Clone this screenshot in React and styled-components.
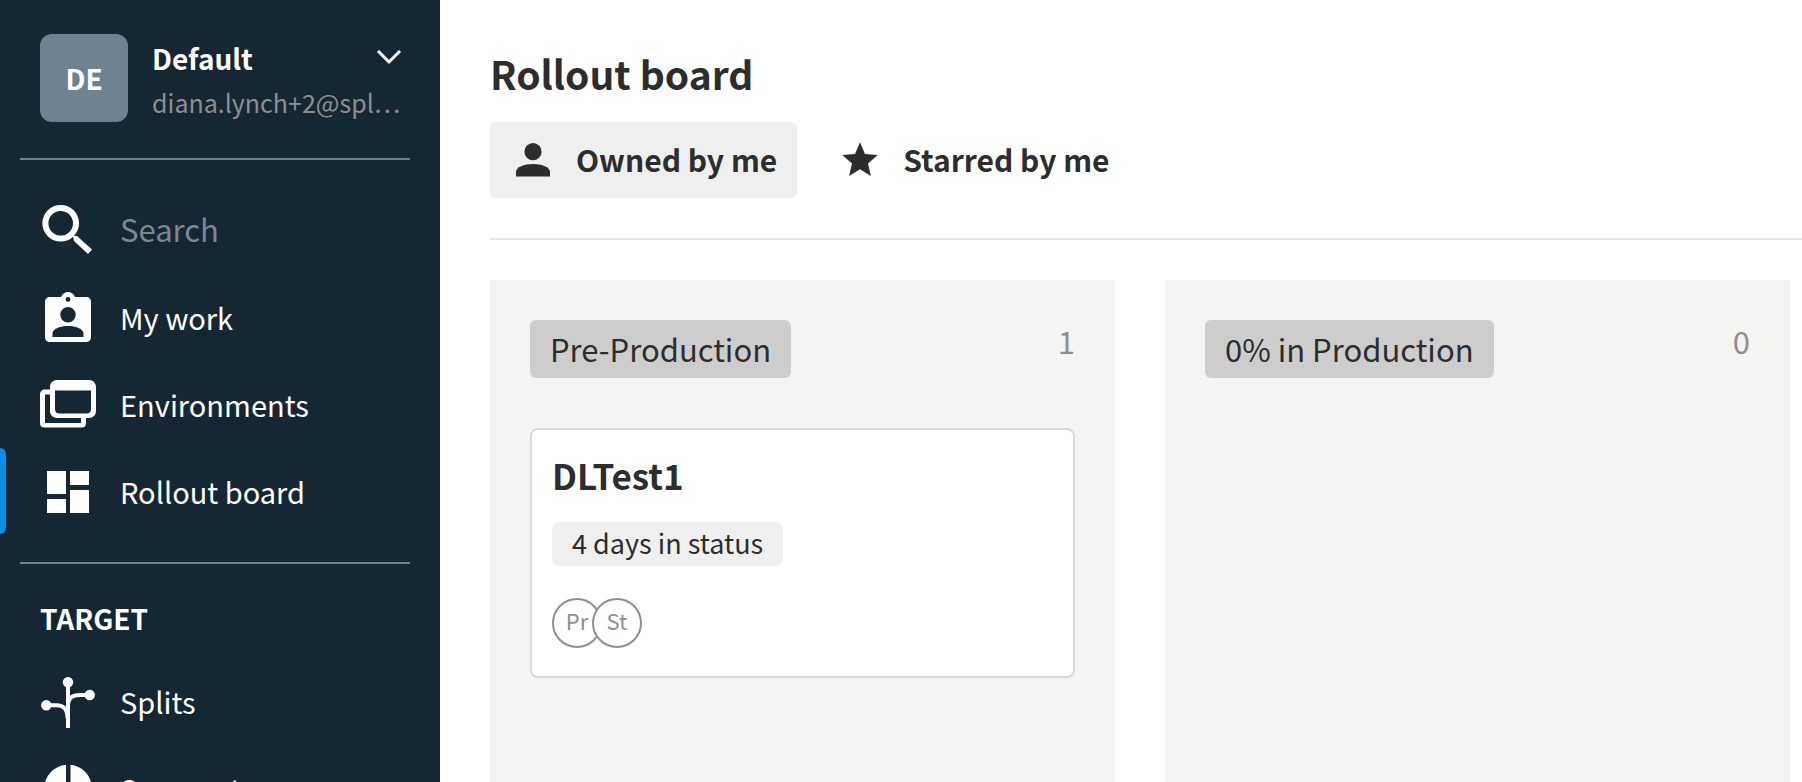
import React from "react";
import styled, { createGlobalStyle, css } from "styled-components";

const Global = createGlobalStyle`
  *, *::before, *::after { box-sizing: border-box; }
  body {
    margin: 0;
    background: #ffffff;
    color: #2d2d2d;
    font-family: "Noto Sans CJK KR", "Noto Sans", sans-serif;
  }
  h1, h2, h3, p, ul { margin: 0; padding: 0; }
  ul { list-style: none; }
  a { color: inherit; text-decoration: none; }
  button, input { font: inherit; color: inherit; border: 0; background: none; margin: 0; padding: 0; }
  button { cursor: pointer; }
`;

const Layout = styled.div`
  display: flex;
  height: 100vh;
  overflow: hidden;
`;

const Sidebar = styled.aside`
  flex: 0 0 440px;
  background: #162734;
  color: #ffffff;
  overflow: hidden;
`;

const Workspace = styled.button`
  display: flex;
  width: 100%;
  gap: 24px;
  padding: 34px 38px 36px 40px;
  text-align: left;
`;

const Avatar = styled.span`
  flex: none;
  display: grid;
  place-items: center;
  width: 88px;
  height: 88px;
  border-radius: 12px;
  background: #708290;
  font-size: 28px;
  font-weight: 700;
`;

const WorkspaceText = styled.span`
  flex: 1;
  min-width: 0;
  display: flex;
  flex-direction: column;
`;

const WorkspaceName = styled.span`
  display: flex;
  justify-content: space-between;
  align-items: center;
  font-size: 28px;
  line-height: 48px;
  font-weight: 700;
`;

const Email = styled.span`
  font-size: 25px;
  line-height: 40px;
  color: #8e8e8e;
  white-space: nowrap;
`;

const SideRule = styled.hr`
  height: 2px;
  margin: 0 30px 0 20px;
  border: 0;
  background: #708290;
`;

const NavList = styled.ul`
  display: flex;
  flex-direction: column;
  gap: 1px;
  padding: ${(p) => p.$pad};
`;

const rowStyle = css`
  display: flex;
  align-items: center;
  gap: 22px;
  height: 86px;
  padding: 0 38px;
  font-size: 29px;
  line-height: 44px;
`;

const NavLink = styled.a`
  ${rowStyle}
  position: relative;
  ${(p) =>
    p.$active &&
    css`
      &::before {
        content: "";
        position: absolute;
        inset: 0 auto 0 0;
        width: 6px;
        border-radius: 0 6px 6px 0;
        background: #0091ea;
      }
    `}
`;

const SearchRow = styled.label`
  ${rowStyle}
`;

const SearchInput = styled.input`
  flex: 1;
  min-width: 0;
  padding-bottom: 2px;
  font-size: 31px;
  outline: none;
  &::placeholder { color: #7c8790; opacity: 1; }
`;

const SectionTitle = styled.h2`
  padding: 32px 40px 0;
  font-size: 28px;
  line-height: 44px;
  font-weight: 700;
`;

const Glyph = styled.svg`
  flex: none;
  display: block;
  fill: currentColor;
`;

const Main = styled.main`
  flex: 1;
  min-width: 0;
  display: flex;
  flex-direction: column;
  padding: 43px 0 0 50px;
`;

const Title = styled.h1`
  font-size: 39px;
  line-height: 60px;
  font-weight: 700;
`;

const Tabs = styled.div`
  display: flex;
  gap: 20px;
  padding: 19px 0 40px;
  border-bottom: 2px solid #e6e6e6;
`;

const Tab = styled.button`
  display: flex;
  align-items: center;
  gap: 20px;
  height: 76px;
  padding: 0 20px;
  border-radius: 6px;
  background: ${(p) => (p.$selected ? "#efefef" : "transparent")};
  font-size: 30px;
  line-height: 48px;
  font-weight: 700;
  white-space: nowrap;
`;

const TabLabel = styled.span`
  padding-bottom: 2px;
`;

const Board = styled.div`
  flex: 1;
  display: flex;
  gap: 50px;
  padding: 40px 12px 0 0;
`;

const Column = styled.section`
  flex: 1 1 0;
  min-width: 0;
  padding: 40px;
  background: #f4f4f3;
`;

const ColumnHeader = styled.header`
  display: flex;
  justify-content: space-between;
  align-items: flex-start;
  margin-bottom: 50px;
`;

const Stage = styled.h2`
  padding: 7px 20px;
  border-radius: 6px;
  background: #cdcdcd;
  font-size: 31px;
  line-height: 44px;
  font-weight: 400;
`;

const Count = styled.span`
  font-size: 31px;
  line-height: 42px;
  color: #8e8e8e;
`;

const Card = styled.article`
  display: flex;
  flex-direction: column;
  align-items: flex-start;
  padding: 20px 20px 28px;
  border: 2px solid #d9d9d8;
  border-radius: 8px;
  background: #ffffff;
`;

const CardTitle = styled.h3`
  font-size: 35px;
  line-height: 50px;
  font-weight: 700;
`;

const Status = styled.p`
  margin: 22px 0 32px;
  padding: 0 20px 2px;
  border-radius: 8px;
  background: #efefef;
  font-size: 27px;
  line-height: 42px;
`;

const Environments = styled.ul`
  display: flex;
`;

const Environment = styled.li`
  display: grid;
  place-items: center;
  width: 50px;
  height: 50px;
  padding-bottom: 6px;
  border: 2px solid #8e8e8e;
  border-radius: 50%;
  background: #ffffff;
  color: #8e8e8e;
  font-size: 22px;
  line-height: 32px;
  & + & { margin-left: -10px; }
`;

function NavIcon({ children }) {
  return (
    <Glyph width="60" height="60" viewBox="0 0 60 60" aria-hidden="true">
      {children}
    </Glyph>
  );
}

const icons = {
  search: (
    <NavIcon>
      <circle cx="22.700" cy="23.300" r="15.300" fill="none" stroke="currentColor" strokeWidth="6" />
      <path d="M35 36h4l15 13.500-4 4.500-14-13z" />
    </NavIcon>
  ),
  work: (
    <NavIcon>
      <path
        fillRule="evenodd"
        d="M49 10H37C36 7 33 5 30 5s-6 2-7 5H12c-3 0-5 2-5 5v35c0 3 2 5 5 5h36c3 0 5-2 5-5V15c0-3-2-5-4-5zM30 10a2.400 2.400 0 1 1 0 4.800 2.400 2.400 0 0 1 0-4.800zM30 20a7.700 7.700 0 1 1 0 15.400A7.700 7.700 0 0 1 30 20zM45.500 50h-31v-3.500c0-5 8-7.500 15.500-7.500s15.500 2.500 15.500 7.500z"
      />
    </NavIcon>
  ),
  environments: (
    <NavIcon>
      <path
        fillRule="evenodd"
        d="M19 6h32c4 0 7 3 7 7v24c0 4-3 7-7 7H19c-4 0-7-3-7-7V13c0-4 3-7 7-7zM17 16.500V35c0 3 1.500 4.500 4.500 4.500h27c3 0 4.500-1.500 4.500-4.500V16.500z"
      />
      <path d="M12 15.500v5H7v28.500h36V44h5v5c0 3-1.500 4.500-4.500 4.500H6.500C3.500 53.500 2 52 2 49V20.500c0-3 2-5 5-5z" />
    </NavIcon>
  ),
  board: (
    <NavIcon>
      <path d="M9 10h19v23H9zM9 38h19v14H9zM32 10h19v14H32zM32 29h19v23H32z" />
    </NavIcon>
  ),
  splits: (
    <NavIcon>
      <circle cx="30" cy="11.300" r="5.200" />
      <circle cx="51.700" cy="24" r="5.200" />
      <circle cx="8.300" cy="34.300" r="5.200" />
      <path
        d="M30 11v46M51 24h-9c-8 0-12 3-12 11M9 34.300h9c8 0 11.500 4 11.500 13"
        fill="none"
        stroke="currentColor"
        strokeWidth="4"
      />
    </NavIcon>
  ),
  segments: (
    <NavIcon>
      <path d="M28 6.800v47.800A24 24 0 0 1 28 6.800zM32.500 6.800A24 24 0 0 1 53.900 28H32.500zM32.500 33H53.900A24 24 0 0 1 32.500 54.600z" />
    </NavIcon>
  ),
};

const workItems = [
  { label: "My work", icon: icons.work },
  { label: "Environments", icon: icons.environments },
  { label: "Rollout board", icon: icons.board, active: true },
];

const targetItems = [
  { label: "Splits", icon: icons.splits },
  { label: "Segments", icon: icons.segments },
];

const columns = [
  {
    stage: "Pre-Production",
    cards: [{ name: "DLTest1", status: "4 days in status", environments: ["Pr", "St"] }],
  },
  { stage: "0% in Production", cards: [] },
];

function NavItem({ item }) {
  return (
    <li>
      <NavLink href="#" $active={item.active} aria-current={item.active ? "page" : undefined}>
        {item.icon}
        {item.label}
      </NavLink>
    </li>
  );
}

function BoardColumn({ column }) {
  return (
    <Column>
      <ColumnHeader>
        <Stage>{column.stage}</Stage>
        <Count>{column.cards.length}</Count>
      </ColumnHeader>
      {column.cards.map((card) => (
        <Card key={card.name}>
          <CardTitle>{card.name}</CardTitle>
          <Status>{card.status}</Status>
          <Environments>
            {card.environments.map((name) => (
              <Environment key={name}>{name}</Environment>
            ))}
          </Environments>
        </Card>
      ))}
    </Column>
  );
}

export default function App() {
  return (
    <>
      <Global />
      <Layout>
        <Sidebar>
          <Workspace type="button" aria-haspopup="menu">
            <Avatar>DE</Avatar>
            <WorkspaceText>
              <WorkspaceName>
                Default
                <Glyph width="26" height="16" viewBox="0 0 26 16" aria-hidden="true">
                  <path d="M2 1l11 11L24 1" fill="none" stroke="currentColor" strokeWidth="3" />
                </Glyph>
              </WorkspaceName>
              <Email>diana.lynch+2@spl…</Email>
            </WorkspaceText>
          </Workspace>
          <SideRule />
          <nav>
            <NavList $pad="27px 0 28px">
              <li>
                <SearchRow>
                  {icons.search}
                  <SearchInput type="text" placeholder="Search" aria-label="Search" />
                </SearchRow>
              </li>
              {workItems.map((item) => (
                <NavItem key={item.label} item={item} />
              ))}
            </NavList>
            <SideRule />
            <SectionTitle>TARGET</SectionTitle>
            <NavList $pad="18px 0 0">
              {targetItems.map((item) => (
                <NavItem key={item.label} item={item} />
              ))}
            </NavList>
          </nav>
        </Sidebar>
        <Main>
          <Title>Rollout board</Title>
          <Tabs>
            <Tab type="button" $selected aria-pressed="true">
              <Glyph width="46" height="46" viewBox="0 0 46 46" aria-hidden="true">
                <circle cx="23" cy="14.700" r="8.600" />
                <path d="M6 39.500V35c0-5 8-8 17-8s17 3 17 8v4.500z" />
              </Glyph>
              <TabLabel>Owned by me</TabLabel>
            </Tab>
            <Tab type="button" aria-pressed="false">
              <Glyph width="46" height="46" viewBox="0 0 26 26" aria-hidden="true">
                <path d="M13 18.270L19.180 22l-1.640-7.030L23 10.240l-7.190-.610L13 3l-2.810 6.630L3 10.240l5.460 4.730L6.820 22z" />
              </Glyph>
              <TabLabel>Starred by me</TabLabel>
            </Tab>
          </Tabs>
          <Board>
            {columns.map((column) => (
              <BoardColumn key={column.stage} column={column} />
            ))}
          </Board>
        </Main>
      </Layout>
    </>
  );
}
